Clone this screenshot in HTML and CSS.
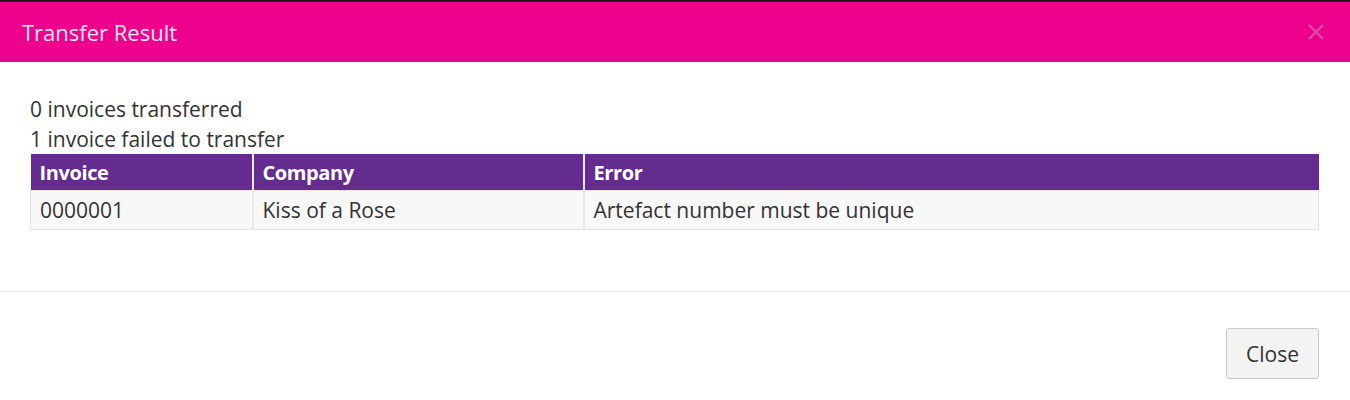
FILE: index.html
```html
<!DOCTYPE html>
<html>
<head>
<meta charset="utf-8">
<link rel="stylesheet" href="styles.css">
</head>
<body>
<div class="backdrop"></div>
<div class="modal">
  <div class="modal-header">
    <h4 class="modal-title">Transfer Result</h4>
    <svg class="close-x" width="18" height="18" viewBox="0 0 18 18"><path d="M2 2L16 16M16 2L2 16" stroke="#e04aa0" stroke-width="2.4" fill="none"/></svg>
  </div>
  <div class="modal-body">
    <p class="line">0 invoices transferred</p>
    <p class="line">1 invoice failed to transfer</p>
    <table class="result">
      <thead>
        <tr><th class="c1">Invoice</th><th class="c2">Company</th><th>Error</th></tr>
      </thead>
      <tbody>
        <tr><td>0000001</td><td>Kiss of a Rose</td><td>Artefact number must be unique</td></tr>
      </tbody>
    </table>
  </div>
  <div class="modal-footer">
    <button class="btn">Close</button>
  </div>
</div>
</body>
</html>
```
FILE: styles.css
```css
html, body {
  margin: 0;
  padding: 0;
  background: #fff;
}
body {
  font-family: "Open Sans", "Liberation Sans", sans-serif;
  color: #333;
  width: 1350px;
  height: 400px;
  overflow: hidden;
}
.backdrop {
  height: 2px;
  background: #1c1c1c;
}
.modal {
  background: #fff;
}
.modal-header {
  background: #ec008c;
  height: 60px;
  display: flex;
  align-items: center;
  justify-content: space-between;
  padding: 0 25px 0 22px;
}
.modal-title {
  margin: 0;
  font-size: 22px;
  font-weight: 400;
  color: #fde6f3;
  line-height: 1;
}
.close-x {
  display: block;
}
.modal-body {
  padding: 32px 30px 0 30px;
  height: 230px;
  box-sizing: border-box;
  border-bottom: 1px solid #e5e5e5;
}
.line {
  margin: 0;
  font-size: 21px;
  line-height: 30px;
}
.result {
  width: 1289px;
  border-collapse: collapse;
  font-size: 21px;
}
.result th {
  background: #652c8f;
  color: #fff;
  font-weight: 700;
  font-size: 20px;
  text-align: left;
  height: 36px;
  padding: 0 9px;
  border-left: 2px solid #ece6f2;
  letter-spacing: -0.4px;
}
.result th:first-child { border-left: none; }
.result th.c1 { width: 203px; }
.result th.c2 { width: 311px; }
.result td {
  background: #f8f8f8;
  height: 38px;
  padding: 0 9px;
  border: 1px solid #e6e6e6;
  border-left: 2px solid #e8e8e8;
}
.result td:first-child { border-left: 1px solid #e6e6e6; }
.modal-footer {
  display: flex;
  justify-content: flex-end;
  padding: 36px 31px 0 0;
}
.btn {
  width: 93px;
  height: 51px;
  font-family: "Open Sans", "Liberation Sans", sans-serif;
  font-size: 21px;
  color: #333;
  background: #f3f3f3;
  border: 1px solid #cbcbcb;
  border-radius: 3px;
  padding: 0;
}
```
